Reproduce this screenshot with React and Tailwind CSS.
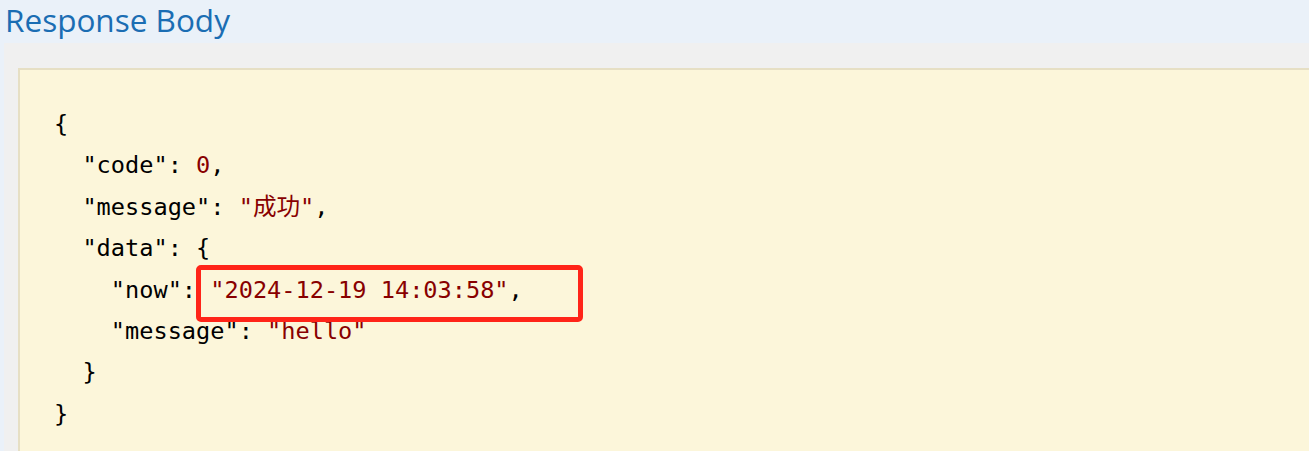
import React from "react";

const S = ({ children }) => <span className="text-[#880000]">{children}</span>;

export default function App() {
  return (
    <div className="w-[1309px] h-[451px] overflow-hidden bg-[#eaf1f9] flex flex-col">
      <div className="h-[43px] shrink-0 pl-[5px] flex items-center">
        <h2
          className="text-[31.5px] leading-[43px] text-[#1b6db3] -mt-[4px]"
          style={{ fontFamily: '"Open Sans", "Noto Sans", sans-serif' }}
        >
          Response Body
        </h2>
      </div>
      <div className="flex-1 ml-[4px] bg-[#f0f0f0] pt-[25px] pl-[14px]">
        <div className="h-full bg-[#fcf6da] border-t-2 border-l-2 border-[#e6dfc4] pt-[34px] pl-[34px]">
          <div className="relative">
            <pre
              className="text-[23.6px] leading-[41.4px] text-black"
              style={{ fontFamily: '"DejaVu Sans Mono", "Noto Sans CJK SC", monospace' }}
            >
{`{
  "code": `}<S>0</S>{`,
  "message": `}<S>"成功"</S>{`,
  "data": {
    "now": `}<S>"2024-12-19 14:03:58"</S>{`,
    "message": `}<S>"hello"</S>{`
  }
}`}
            </pre>
            <div className="absolute left-[142px] top-[161px] w-[387px] h-[57px] border-[5px] border-[#ff2418] rounded-[5px]" />
          </div>
        </div>
      </div>
    </div>
  );
}
